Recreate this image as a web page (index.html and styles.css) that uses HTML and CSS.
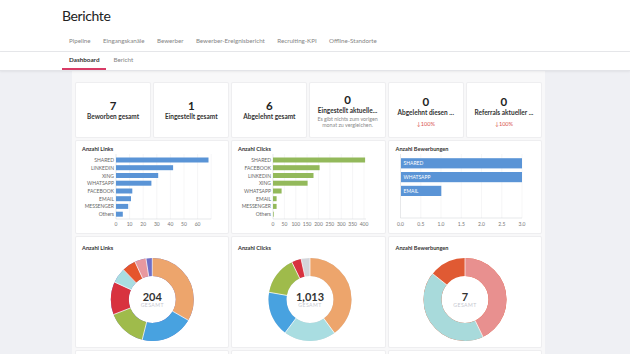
FILE: index.html
```html
<!DOCTYPE html>
<html lang="de">
<head>
<meta charset="utf-8">
<title>Berichte</title>
<link rel="stylesheet" href="styles.css">
</head>
<body>
<header class="top">
  <h1 class="title">Berichte</h1>
  <nav class="tabs">
    <a class="tab">Pipeline</a>
    <a class="tab">Eingangskanäle</a>
    <a class="tab">Bewerber</a>
    <a class="tab">Bewerber-Ereignisbericht</a>
    <a class="tab">Recruiting-KPI</a>
    <a class="tab">Offline-Standorte</a>
  </nav>
</header>
<div class="subtabs">
  <a class="subtab active">Dashboard</a>
  <a class="subtab">Bericht</a>
</div>
<main class="main">
  <div class="panel">
    <div class="stats">
      <div class="stat"><div class="num">7</div><div class="lbl">Beworben gesamt</div></div>
      <div class="stat"><div class="num">1</div><div class="lbl">Eingestellt gesamt</div></div>
      <div class="stat"><div class="num">6</div><div class="lbl">Abgelehnt gesamt</div></div>
      <div class="stat"><div class="num">0</div><div class="lbl">Eingestellt aktuelle...</div><div class="note">Es gibt nichts zum vorigen<br>monat zu vergleichen.</div></div>
      <div class="stat"><div class="num">0</div><div class="lbl">Abgelehnt diesen ...</div><div class="down">↓100%</div></div>
      <div class="stat"><div class="num">0</div><div class="lbl">Referrals aktueller ...</div><div class="down">↓100%</div></div>
    </div>

    <div class="row">
      <div class="card bar-card">
        <svg class="chart" viewBox="0 0 152 92" width="152" height="92">
          <text x="6" y="9.5" class="ct">Anzahl Links</text>
          <g class="grid">
            <line x1="53.6" y1="13" x2="53.6" y2="78"/><line x1="67.2" y1="13" x2="67.2" y2="78"/><line x1="80.8" y1="13" x2="80.8" y2="78"/><line x1="94.4" y1="13" x2="94.4" y2="78"/><line x1="108" y1="13" x2="108" y2="78"/><line x1="121.6" y1="13" x2="121.6" y2="78"/><line x1="135.2" y1="13" x2="135.2" y2="78"/>
          </g>
          <g class="axis"><line x1="40" y1="13" x2="40" y2="78"/><line x1="40" y1="78" x2="135.2" y2="78"/></g>
          <g class="ticks">
            <text x="40" y="85">0</text><text x="53.6" y="85">10</text><text x="67.2" y="85">20</text><text x="80.8" y="85">30</text><text x="94.4" y="85">40</text><text x="108" y="85">50</text><text x="121.6" y="85">60</text>
          </g>
          <g class="blue">
            <rect x="40" y="16.5" width="92.5" height="5"/><rect x="40" y="24.2" width="57.1" height="5"/><rect x="40" y="32" width="42.2" height="5"/><rect x="40" y="39.7" width="35.4" height="5"/><rect x="40" y="47.5" width="16.3" height="5"/><rect x="40" y="55.2" width="15" height="5"/><rect x="40" y="62.9" width="12.2" height="5"/><rect x="40" y="70.7" width="6.8" height="5"/>
          </g>
          <g class="labels">
            <text x="38" y="21">SHARED</text><text x="38" y="28.7">LINKEDIN</text><text x="38" y="36.5">XING</text><text x="38" y="44.2">WHATSAPP</text><text x="38" y="52">FACEBOOK</text><text x="38" y="59.7">EMAIL</text><text x="38" y="67.4">MESSENGER</text><text x="38" y="75.2">Others</text>
          </g>
        </svg>
      </div>
      <div class="card bar-card">
        <svg class="chart" viewBox="0 0 152 92" width="152" height="92">
          <text x="6" y="9.5" class="ct">Anzahl Clicks</text>
          <g class="grid">
            <line x1="52.4" y1="13" x2="52.4" y2="78"/><line x1="63.8" y1="13" x2="63.8" y2="78"/><line x1="75.1" y1="13" x2="75.1" y2="78"/><line x1="86.5" y1="13" x2="86.5" y2="78"/><line x1="97.9" y1="13" x2="97.9" y2="78"/><line x1="109.3" y1="13" x2="109.3" y2="78"/><line x1="120.6" y1="13" x2="120.6" y2="78"/><line x1="132" y1="13" x2="132" y2="78"/>
          </g>
          <g class="axis"><line x1="41" y1="13" x2="41" y2="78"/><line x1="41" y1="78" x2="134" y2="78"/></g>
          <g class="ticks">
            <text x="41" y="85">0</text><text x="52.4" y="85">50</text><text x="63.8" y="85">100</text><text x="75.1" y="85">150</text><text x="86.5" y="85">200</text><text x="97.9" y="85">250</text><text x="109.3" y="85">300</text><text x="120.6" y="85">350</text><text x="132" y="85">400</text>
          </g>
          <g class="green">
            <rect x="41" y="16.5" width="92.1" height="5"/><rect x="41" y="24.2" width="46.6" height="5"/><rect x="41" y="32" width="40.5" height="5"/><rect x="41" y="39.7" width="34.6" height="5"/><rect x="41" y="47.5" width="8.6" height="5"/><rect x="41" y="55.2" width="3.6" height="5"/><rect x="41" y="62.9" width="3.6" height="5"/><rect x="41" y="70.7" width="0.7" height="5"/>
          </g>
          <g class="labels">
            <text x="39" y="21">SHARED</text><text x="39" y="28.7">FACEBOOK</text><text x="39" y="36.5">LINKEDIN</text><text x="39" y="44.2">XING</text><text x="39" y="52">WHATSAPP</text><text x="39" y="59.7">EMAIL</text><text x="39" y="67.4">MESSENGER</text><text x="39" y="75.2">Others</text>
          </g>
        </svg>
      </div>
      <div class="card bar-card">
        <svg class="chart" viewBox="0 0 152 92" width="152" height="92">
          <text x="6.5" y="9.5" class="ct">Anzahl Bewerbungen</text>
          <g class="grid">
            <line x1="31.8" y1="13" x2="31.8" y2="77"/><line x1="52" y1="13" x2="52" y2="77"/><line x1="72.3" y1="13" x2="72.3" y2="77"/><line x1="92.5" y1="13" x2="92.5" y2="77"/><line x1="112.8" y1="13" x2="112.8" y2="77"/><line x1="133" y1="13" x2="133" y2="77"/>
          </g>
          <g class="axis"><line x1="11.5" y1="13" x2="11.5" y2="77"/><line x1="11.5" y1="77" x2="133" y2="77"/></g>
          <g class="ticks">
            <text x="11.5" y="85">0.0</text><text x="31.8" y="85">0.5</text><text x="52" y="85">1.0</text><text x="72.3" y="85">1.5</text><text x="92.5" y="85">2.0</text><text x="112.8" y="85">2.5</text><text x="133" y="85">3.0</text>
          </g>
          <g class="blue">
            <rect x="12" y="17.2" width="121" height="10.2"/><rect x="12" y="31" width="121" height="10.2"/><rect x="12" y="44.8" width="40.3" height="10.2"/>
          </g>
          <g class="inlabels">
            <text x="14.5" y="24.3">SHARED</text><text x="14.5" y="38.1">WHATSAPP</text><text x="14.5" y="51.9">EMAIL</text>
          </g>
        </svg>
      </div>
    </div>

    <div class="row">
      <div class="card donut-card">
        <svg class="chart" viewBox="0 0 152 110" width="152" height="110">
          <text x="6" y="13.3" class="ct">Anzahl Links</text>
          <g transform="translate(76.3 62.5) rotate(-90)" class="ring">
            <circle r="32.5" stroke="#6f6fc6"/>
            <circle r="32.5" pathLength="204" stroke="#eda56c" stroke-dasharray="68 136" stroke-dashoffset="0"/>
            <circle r="32.5" pathLength="204" stroke="#48a2e0" stroke-dasharray="42 162" stroke-dashoffset="-68"/>
            <circle r="32.5" pathLength="204" stroke="#9fbb4b" stroke-dasharray="31 173" stroke-dashoffset="-110"/>
            <circle r="32.5" pathLength="204" stroke="#d8323f" stroke-dasharray="26 178" stroke-dashoffset="-141"/>
            <circle r="32.5" pathLength="204" stroke="#a9dde1" stroke-dasharray="12 192" stroke-dashoffset="-167"/>
            <circle r="32.5" pathLength="204" stroke="#e5552c" stroke-dasharray="11 193" stroke-dashoffset="-179"/>
            <circle r="32.5" pathLength="204" stroke="#e8989f" stroke-dasharray="9 195" stroke-dashoffset="-190"/>
          </g>
          <g transform="translate(76.3 62.5)" class="sep">
            <line y1="-23" y2="-42"/>
            <line y1="-23" y2="-42" transform="rotate(120)"/>
            <line y1="-23" y2="-42" transform="rotate(194.1)"/>
            <line y1="-23" y2="-42" transform="rotate(248.8)"/>
            <line y1="-23" y2="-42" transform="rotate(294.7)"/>
            <line y1="-23" y2="-42" transform="rotate(315.9)"/>
            <line y1="-23" y2="-42" transform="rotate(335.3)"/>
            <line y1="-23" y2="-42" transform="rotate(351.2)"/>
          </g>
          <text x="76.3" y="63.5" class="total">204</text>
          <text x="76.3" y="70.3" class="gesamt">GESAMT</text>
        </svg>
      </div>
      <div class="card donut-card">
        <svg class="chart" viewBox="0 0 152 110" width="152" height="110">
          <text x="6" y="13.3" class="ct">Anzahl Clicks</text>
          <g transform="translate(78 62.5) rotate(-90)" class="ring">
            <circle r="32.5" stroke="#d3d5da"/>
            <circle r="32.5" pathLength="1013" stroke="#eda56c" stroke-dasharray="405 608" stroke-dashoffset="0"/>
            <circle r="32.5" pathLength="1013" stroke="#a9dde1" stroke-dasharray="205 808" stroke-dashoffset="-405"/>
            <circle r="32.5" pathLength="1013" stroke="#48a2e0" stroke-dasharray="178 835" stroke-dashoffset="-610"/>
            <circle r="32.5" pathLength="1013" stroke="#9fbb4b" stroke-dasharray="152 861" stroke-dashoffset="-788"/>
            <circle r="32.5" pathLength="1013" stroke="#d8323f" stroke-dasharray="38 975" stroke-dashoffset="-940"/>
          </g>
          <g transform="translate(78 62.5)" class="sep">
            <line y1="-23" y2="-42"/>
            <line y1="-23" y2="-42" transform="rotate(143.9)"/>
            <line y1="-23" y2="-42" transform="rotate(216.8)"/>
            <line y1="-23" y2="-42" transform="rotate(280)"/>
            <line y1="-23" y2="-42" transform="rotate(334.1)"/>
            <line y1="-23" y2="-42" transform="rotate(347.6)"/>
          </g>
          <text x="78" y="63.5" class="total">1,013</text>
          <text x="78" y="70.3" class="gesamt">GESAMT</text>
        </svg>
      </div>
      <div class="card donut-card">
        <svg class="chart" viewBox="0 0 152 110" width="152" height="110">
          <text x="6.5" y="13.3" class="ct">Anzahl Bewerbungen</text>
          <g transform="translate(76 62.5) rotate(-90)" class="ring">
            <circle r="32.5" stroke="#e05a33"/>
            <circle r="32.5" pathLength="7" stroke="#e8908f" stroke-dasharray="3 4" stroke-dashoffset="0"/>
            <circle r="32.5" pathLength="7" stroke="#a8dadb" stroke-dasharray="3 4" stroke-dashoffset="-3"/>
          </g>
          <g transform="translate(76 62.5)" class="sep">
            <line y1="-23" y2="-42"/>
            <line y1="-23" y2="-42" transform="rotate(154.3)"/>
            <line y1="-23" y2="-42" transform="rotate(308.6)"/>
          </g>
          <text x="76" y="63.5" class="total">7</text>
          <text x="76" y="70.3" class="gesamt">GESAMT</text>
        </svg>
      </div>
    </div>

    <div class="row">
      <div class="card tail-card"></div>
      <div class="card tail-card"></div>
      <div class="card tail-card"></div>
    </div>
  </div>
</main>
</body>
</html>
```

FILE: styles.css
```css
html, body {
  margin: 0;
  padding: 0;
}
body {
  width: 630px;
  height: 354px;
  overflow: hidden;
  background: #ffffff;
  font-family: Lato, "Noto Sans", "DejaVu Sans", sans-serif;
  color: #333;
}
.top {
  height: 51px;
  border-bottom: 1px solid #e6e7ea;
  padding-left: 62px;
  box-sizing: content-box;
}
.title {
  margin: 0;
  padding-top: 9px;
  font-size: 14px;
  line-height: 14px;
  font-weight: 400;
  letter-spacing: -0.4px;
  color: #222;
}
.tabs {
  display: flex;
  margin-top: 11px;
  padding-left: 7px;
  font-size: 6.2px;
  line-height: 13px;
  color: #858585;
}
.tab {
  margin-right: 12.4px;
}
.subtabs {
  display: flex;
  height: 18px;
  padding-left: 62px;
  border-bottom: 1px solid #e3e4e8;
  box-shadow: 0 1px 2px rgba(0, 0, 0, 0.06);
  position: relative;
  z-index: 1;
}
.subtab {
  padding: 0 7px;
  font-size: 6.3px;
  line-height: 16px;
  color: #858585;
  border-bottom: 2px solid transparent;
}
.subtab.active {
  font-weight: 700;
  color: #333;
  border-bottom-color: #d83b66;
}
.main {
  height: 283px;
  background: #eff0f4;
  overflow: hidden;
}
.panel {
  margin-left: 72px;
  width: 465px;
  padding: 12px 4px 0;
  background: #f8f8f9;
  height: 100%;
  display: flex;
  flex-direction: column;
  gap: 4px;
}
.stats {
  display: grid;
  grid-template-columns: repeat(6, 1fr);
  gap: 4px;
}
.stat, .card {
  background: #ffffff;
  box-shadow: 0 0 0 1px #eeeef0;
  border-radius: 1px;
}
.stat {
  height: 54px;
  box-sizing: border-box;
  padding: 2px 4px 0;
  display: flex;
  flex-direction: column;
  align-items: center;
  justify-content: center;
  text-align: center;
  white-space: nowrap;
}
.num {
  font-size: 11.5px;
  line-height: 12px;
  font-weight: 700;
  color: #222;
}
.lbl {
  font-size: 6.5px;
  line-height: 10px;
  font-weight: 700;
  color: #333;
}
.note {
  margin-top: 1px;
  font-size: 5.3px;
  line-height: 5.6px;
  color: #8a8a8a;
}
.down {
  margin-top: 3px;
  font-size: 5.6px;
  line-height: 6px;
  color: #d9534f;
}
.row {
  display: grid;
  grid-template-columns: repeat(3, 1fr);
  gap: 4px;
}
.bar-card {
  height: 92px;
}
.donut-card {
  height: 110px;
}
.tail-card {
  height: 40px;
}
.chart {
  display: block;
  font-family: Lato, "Noto Sans", sans-serif;
}
.ct {
  font-size: 5.6px;
  font-weight: 700;
  fill: #333;
}
.grid line {
  stroke: #ececee;
  stroke-width: 0.5;
}
.axis line {
  stroke: #cfd0d4;
  stroke-width: 0.5;
}
.ticks text {
  font-size: 5px;
  fill: #777;
  text-anchor: middle;
}
.labels text {
  font-size: 5px;
  fill: #666;
  text-anchor: end;
}
.inlabels text {
  font-size: 5px;
  fill: #ffffff;
}
.blue rect {
  fill: #5a94d6;
}
.green rect {
  fill: #93b95b;
}
.ring circle {
  fill: none;
  stroke-width: 18;
}
.sep line {
  stroke: #ffffff;
  stroke-width: 0.7;
}
.total {
  font-size: 11px;
  font-weight: 700;
  fill: #333;
  text-anchor: middle;
}
.gesamt {
  font-size: 5.2px;
  fill: #c6c7cf;
  letter-spacing: 0.4px;
  text-anchor: middle;
}
```
